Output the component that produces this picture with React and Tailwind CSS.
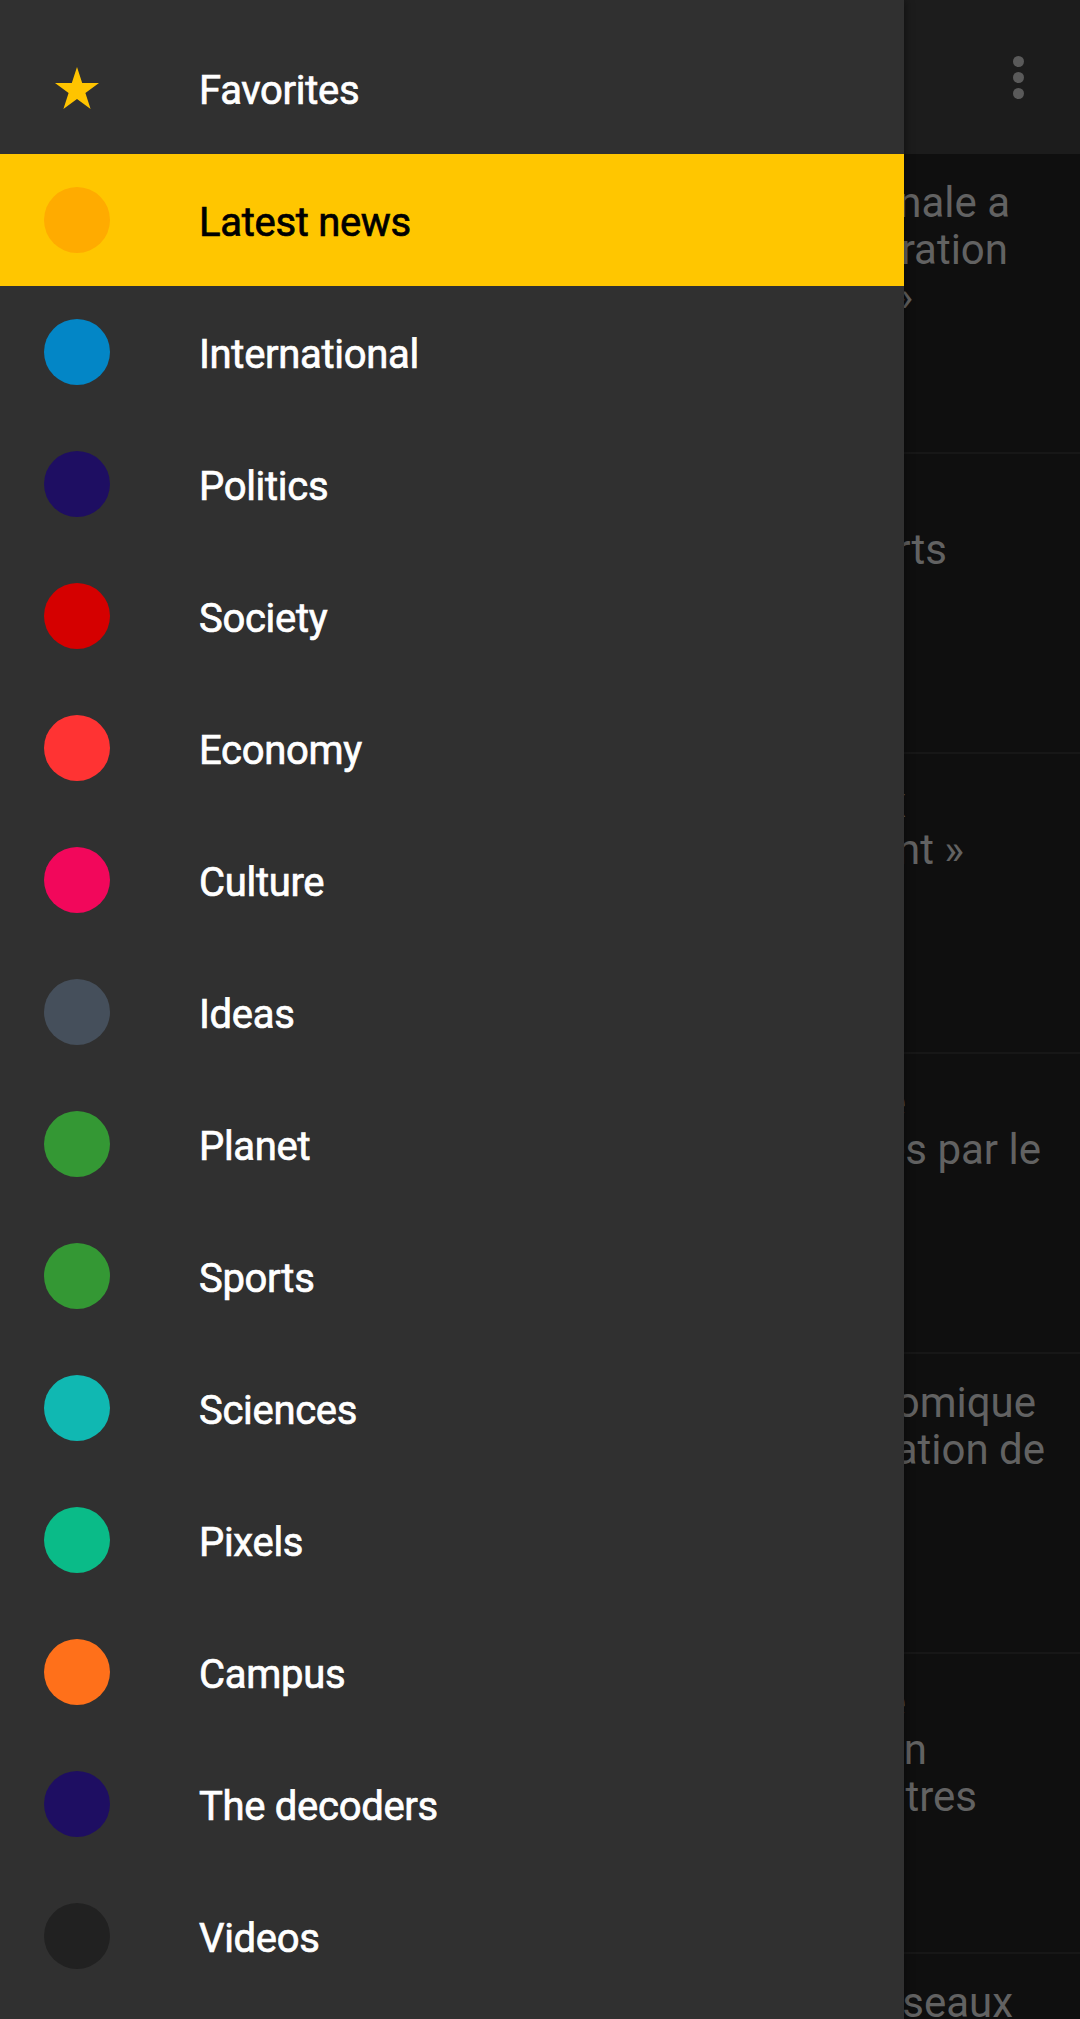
import React from 'react';

const categories = [
  { name: 'Latest news', color: 'bg-[#ffab00]', active: true },
  { name: 'International', color: 'bg-[#0386c6]' },
  { name: 'Politics', color: 'bg-[#1e0e62]' },
  { name: 'Society', color: 'bg-[#d50000]' },
  { name: 'Economy', color: 'bg-[#ff3333]' },
  { name: 'Culture', color: 'bg-[#f2075b]' },
  { name: 'Ideas', color: 'bg-[#454f5b]' },
  { name: 'Planet', color: 'bg-[#349834]' },
  { name: 'Sports', color: 'bg-[#349834]' },
  { name: 'Sciences', color: 'bg-[#10b8b2]' },
  { name: 'Pixels', color: 'bg-[#0abb88]' },
  { name: 'Campus', color: 'bg-[#ff701a]' },
  { name: 'The decoders', color: 'bg-[#1e0e62]' },
  { name: 'Videos', color: 'bg-[#212121]' },
];

// headlines behind the drawer, only their right ends show
const articles = [
  [
    { t: "L'Assemblée nationale a", r: 'pr-[70px]' },
    { t: "voté l'inauguration", r: 'pr-[72px]' },
    { t: '« sans précédent »', r: 'pr-[167px]' },
  ],
  [
    { t: 'Jeux olympiques :', r: 'pr-[240px]' },
    { t: 'le bilan des sports', r: 'pr-[133px]' },
  ],
  [
    { t: '« Les grands travaux', r: 'pr-[174px]' },
    { t: 'avancent lentement »', r: 'pr-[116px]' },
  ],
  [
    { t: 'Les retraites adoptée', r: 'pr-[174px]' },
    { t: 'en séance, critiquées par le', r: 'pr-[39px]' },
  ],
  [
    { t: 'La croissance économique', r: 'pr-[44px]' },
    { t: "freinée par l'augmentation de", r: 'pr-[35px]' },
  ],
  [
    { t: 'Le gouvernement propose une', r: 'pr-[174px]' },
    { t: 'nouvelle consultation', r: 'pr-[153px]' },
    { t: 'sur les retraites et autres', r: 'pr-[103px]' },
  ],
  [{ t: 'La bataille des réseaux', r: 'pr-[67px]' }],
];

const Star = () => (
  <svg width="44" height="42" viewBox="0 0 44 42">
    <polygon
      points="22,0 27.2,15.9 44,16 30.4,25.9 35.6,42 22,32.1 8.4,42 13.6,25.9 0,16 16.8,15.9"
      fill="#ffc400"
    />
  </svg>
);

export default function App() {
  return (
    <div className="relative w-[1080px] h-[2019px] overflow-hidden bg-[#0f0f0f] font-['Roboto',sans-serif]">
      {/* page under the drawer */}
      <div className="flex flex-col">
        <div className="h-[154px] bg-[#1c1c1c] flex items-center justify-end pr-[56px]">
          <div className="flex flex-col gap-[5px]">
            <span className="w-[11px] h-[11px] rounded-full bg-[#5a5a5a]" />
            <span className="w-[11px] h-[11px] rounded-full bg-[#5a5a5a]" />
            <span className="w-[11px] h-[11px] rounded-full bg-[#5a5a5a]" />
          </div>
        </div>
        {articles.map((lines, i) => (
          <div key={i} className="h-[300px] shrink-0 border-b-2 border-[#171717] pt-[25px] overflow-hidden">
            {lines.map((l, j) => (
              <div
                key={j}
                className={`text-right whitespace-nowrap text-[42px] leading-[47px] text-[#626262] ${l.r}`}
              >
                {l.t}
              </div>
            ))}
          </div>
        ))}
      </div>

      {/* navigation drawer */}
      <nav className="absolute top-0 left-0 bottom-0 w-[904px] bg-[#303030] pt-[22px] shadow-[2px_0_8px_rgba(0,0,0,0.35)]">
        <div className="flex items-center h-[132px] pl-[44px]">
          <div className="w-[66px] flex justify-center">
            <Star />
          </div>
          <span className="ml-[89px] pt-[5px] text-[40px] tracking-[-0.3px] font-normal text-white [-webkit-text-stroke:0.7px_#ffffff]">
            Favorites
          </span>
        </div>
        {categories.map((c) => (
          <div
            key={c.name}
            className={`flex items-center h-[132px] pl-[44px] ${c.active ? 'bg-[#ffc600]' : ''}`}
          >
            <span className={`w-[66px] h-[66px] rounded-full ${c.color}`} />
            <span
              className={`ml-[89px] pt-[5px] text-[40px] tracking-[-0.3px] font-normal ${
                c.active
                  ? 'text-black [-webkit-text-stroke:0.7px_#000000]'
                  : 'text-white [-webkit-text-stroke:0.7px_#ffffff]'
              }`}
            >
              {c.name}
            </span>
          </div>
        ))}
      </nav>
    </div>
  );
}
